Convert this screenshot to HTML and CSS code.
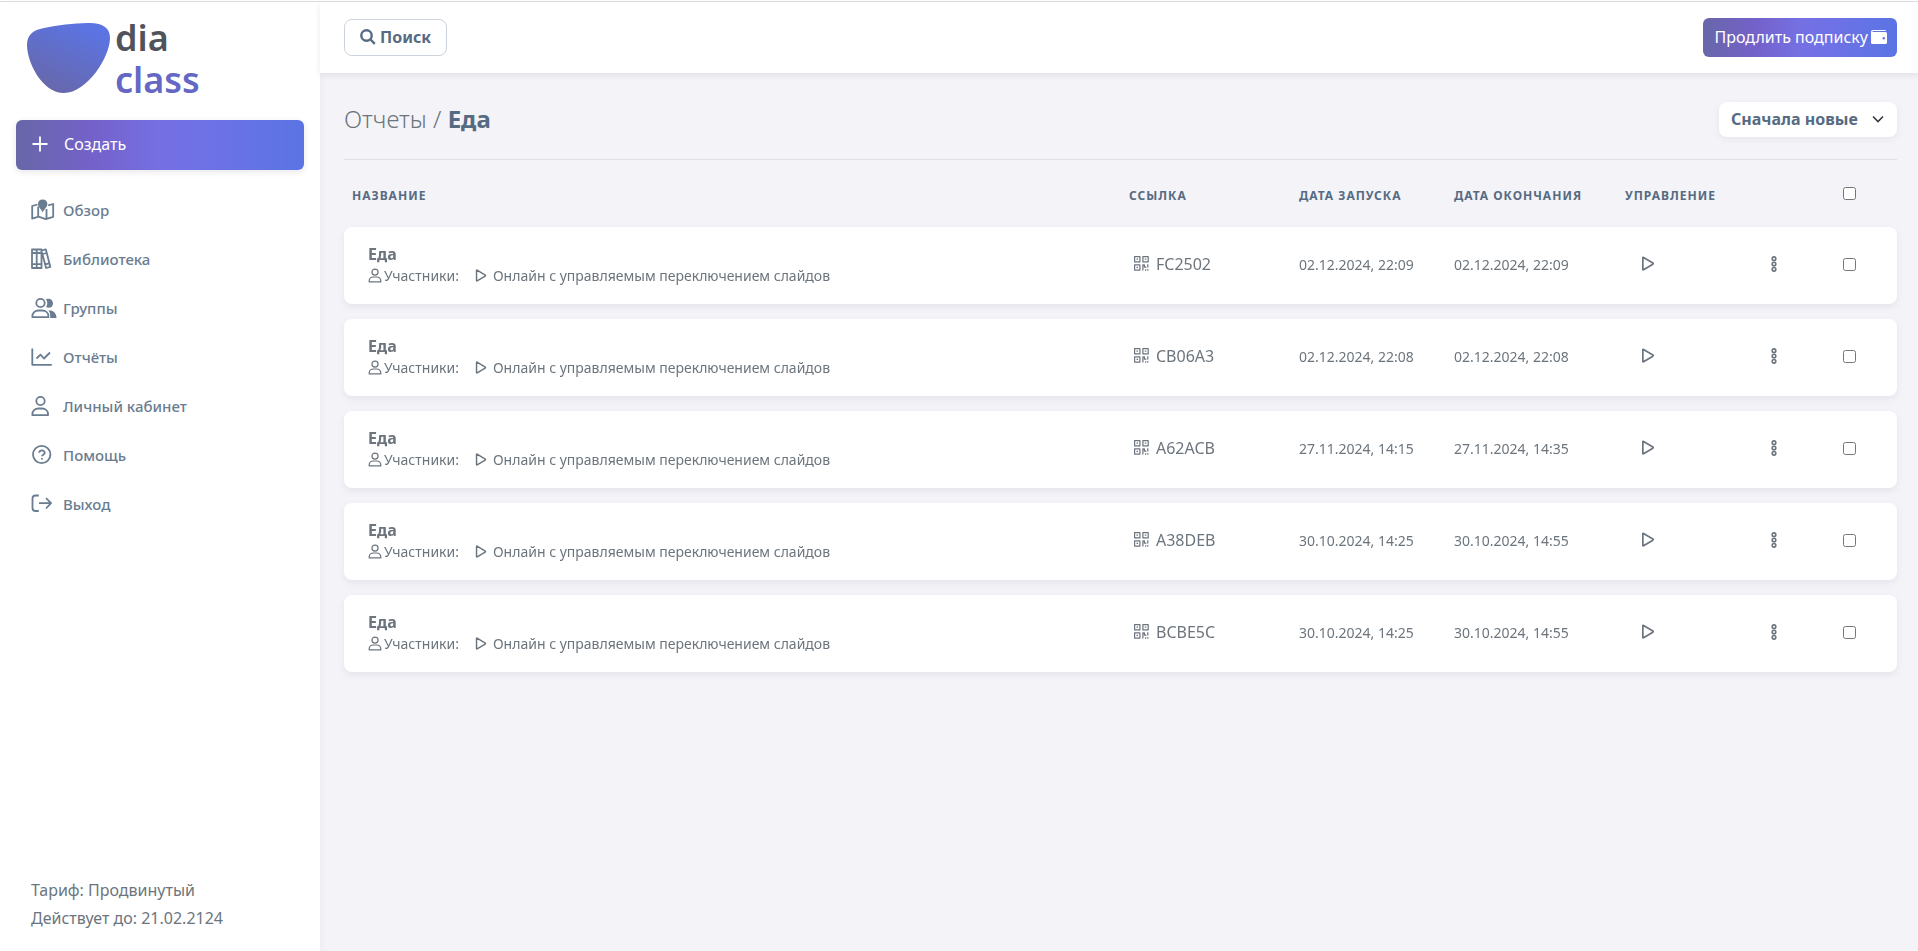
FILE: index.html
```html
<!DOCTYPE html>
<html lang="ru">
<head>
<meta charset="utf-8">
<title>Отчеты / Еда</title>
<link rel="stylesheet" href="styles.css">
</head>
<body>
<svg class="sprite" aria-hidden="true">
  <symbol id="user" viewBox="0 0 20 22"><circle cx="10" cy="6" r="4.5"/><path d="M1.5 20.5v-1.300c0-3.600 2.900-6 6.500-6h4c3.600 0 6.500 2.400 6.500 6v1.300z"/></symbol>
  <symbol id="play" viewBox="0 0 14 16"><path d="M1.500 1.700v12.600q0 .7.7.4l10-6q.7-.7 0-1.200l-10-6q-.7-.4-.7.2z"/></symbol>
  <symbol id="qr" viewBox="0 0 15 15"><path d="M.6.600h5.300v5.300H.6zM8.900.600h5.300v5.300H8.900zM.6 8.800h5.300v5.300H.6z"/><path d="M2.500 3.200h1.500M10.800 3.200h1.500M2.500 11.400h1.500M8.900 14.600V8.800h1.500v2.300h2M13.800 8.200v3.300M11.700 13.200v1.500M13 13.800h1.500"/></symbol>
  <symbol id="dots" viewBox="0 0 6 16"><circle cx="3" cy="2.700" r="1.800"/><circle cx="3" cy="8" r="1.800"/><circle cx="3" cy="13.300" r="1.800"/></symbol>
</svg>
<div class="app">
  <aside class="sidebar">
    <a class="logo" href="#" aria-label="dia class">
      <svg class="logo-mark" viewBox="0 0 84 70"><defs><linearGradient id="lg" x1=".3" y1="1" x2=".8" y2=".1"><stop offset="0" stop-color="#6867aa"/><stop offset="1" stop-color="#5b74e2"/></linearGradient></defs><path fill="url(#lg)" d="M17 5Q38 .6 61 0C76-.2 83 5 83 15C83 34 60 70 37 70C15 70 0 39 0 22C0 12 6 7 17 5Z"/></svg>
      <span class="logo-text"><span class="logo-dark">dia</span><span>class</span></span>
    </a>
    <button class="create" type="button">
      <svg class="icon16" viewBox="0 0 16 16"><path d="M8 .5v15M.5 8h15"/></svg>Создать
    </button>
    <nav class="menu">
      <a href="#"><svg viewBox="0 0 26 22"><path d="M6.500 5.500L1.200 7v12.700l6.300-2 7.200 2.400 7.500-2.200V5l-5 1.300M7.200 7.500v10M15.500 10v9.500"/><path class="solid" d="M11.700.500c-3 0-4.700 2-4.700 4.600 0 3 3 5 4.700 8.200 1.700-3.200 4.700-5.200 4.700-8.200 0-2.600-1.700-4.600-4.700-4.600z"/></svg>Обзор</a>
      <a href="#"><svg viewBox="0 0 26 22"><path d="M1 1.500h9.500v18.500H1zM5.700 1.500v18.500M1 5h9.500M1 16.200h9.500M10.500 2.500l4.300-1.200 4.500 17.500-4.200 1.200-4.300-16M11.700 6l4-1M14.200 16.300l4-1"/></svg>Библиотека</a>
      <a href="#"><svg viewBox="0 0 26 22"><circle cx="9.500" cy="6" r="4.200"/><path d="M1.400 20.200v-1.200c0-3.200 2.600-5.500 6-5.500h4c3.400 0 6 2.300 6 5.500v1.200z"/><path class="solid" d="M15 2.200c3.500-1.500 7 .6 7 4.200s-3.500 5.500-7 3.700c1.700-2.600 1.700-5.400 0-7.900zM17.500 13.200c4.600-.2 8 2.800 8 7.800h-6.300c.2-3.400-.1-5.500-1.700-7.800z"/></svg>Группы</a>
      <a href="#"><svg viewBox="0 0 26 22"><path d="M1.300 2.500v16.300h19.500M5.500 12.500l4-3.800 3.500 3.800 6-6"/></svg>Отчёты</a>
      <a href="#"><svg viewBox="0 0 26 22"><circle cx="9.500" cy="6" r="4.200"/><path d="M1.400 20.200v-1.200c0-3.200 2.600-5.500 6-5.500h3.600c3.400 0 6 2.300 6 5.500v1.200z"/></svg>Личный кабинет</a>
      <a href="#"><svg viewBox="0 0 26 22"><circle cx="10.700" cy="10.500" r="8.700"/><path d="M8.200 8.800c0-3.300 5.800-3 5.500.1-.2 1.800-2.600 1.700-2.700 3.400M11 14v1.500"/></svg>Помощь</a>
      <a href="#"><svg viewBox="0 0 26 22"><path d="M7.800 2.500H4.500Q1.500 2.500 1.500 5.500v9.500q0 3 3 3h3.300M8 10.200h12M15 5l5 5.200-5 5.300"/></svg>Выход</a>
    </nav>
    <div class="tariff"><div>Тариф: Продвинутый</div><div>Действует до: 21.02.2124</div></div>
  </aside>
  <div class="page">
    <header class="topbar">
      <button class="search" type="button"><svg class="icon16" viewBox="0 0 16 16"><circle cx="6.500" cy="6.500" r="5.200"/><path d="M10.500 10.500l4.300 4.300"/></svg>Поиск</button>
      <button class="renew" type="button">Продлить подписку<svg class="icon16" viewBox="0 0 16 16"><path class="solid" d="M2 1h12q1 0 1 1H2q-.6 0-.6.500T2 3h12.500Q16 3 16 4.500v9q0 1.500-1.500 1.500h-13Q0 15 0 13.500V3Q0 1 2 1z"/><circle class="hole" cx="12.800" cy="9.200" r="1.200"/></svg></button>
    </header>
    <main>
      <div class="heading">
        <h1><a href="#">Отчеты</a> / <b>Еда</b></h1>
        <select class="sort" aria-label="Сортировка"><option>Сначала новые</option><option>Сначала старые</option></select>
      </div>
      <table class="reports">
        <colgroup><col><col class="c-link"><col class="c-start"><col class="c-end"><col class="c-play"><col class="c-more"><col class="c-check"></colgroup>
        <thead><tr><th>Название</th><th>Ссылка</th><th>Дата запуска</th><th>Дата окончания</th><th colspan="2">Управление</th><th class="check"><input type="checkbox" aria-label="Выбрать все"></th></tr></thead>
        <tbody>
          <tr><td><strong>Еда</strong><div class="meta"><svg class="m-user"><use href="#user"/></svg><span>Участники:</span><svg class="m-play"><use href="#play"/></svg><span>Онлайн с управляемым переключением слайдов</span></div></td><td><a class="code" href="#"><svg><use href="#qr"/></svg>FC2502</a></td><td>02.12.2024, 22:09</td><td>02.12.2024, 22:09</td><td><button class="play" type="button" aria-label="Запустить"><svg><use href="#play"/></svg></button></td><td><button class="more" type="button" aria-label="Ещё"><svg><use href="#dots"/></svg></button></td><td class="check"><input type="checkbox" aria-label="Выбрать FC2502"></td></tr>
          <tr><td><strong>Еда</strong><div class="meta"><svg class="m-user"><use href="#user"/></svg><span>Участники:</span><svg class="m-play"><use href="#play"/></svg><span>Онлайн с управляемым переключением слайдов</span></div></td><td><a class="code" href="#"><svg><use href="#qr"/></svg>CB06A3</a></td><td>02.12.2024, 22:08</td><td>02.12.2024, 22:08</td><td><button class="play" type="button" aria-label="Запустить"><svg><use href="#play"/></svg></button></td><td><button class="more" type="button" aria-label="Ещё"><svg><use href="#dots"/></svg></button></td><td class="check"><input type="checkbox" aria-label="Выбрать CB06A3"></td></tr>
          <tr><td><strong>Еда</strong><div class="meta"><svg class="m-user"><use href="#user"/></svg><span>Участники:</span><svg class="m-play"><use href="#play"/></svg><span>Онлайн с управляемым переключением слайдов</span></div></td><td><a class="code" href="#"><svg><use href="#qr"/></svg>A62ACB</a></td><td>27.11.2024, 14:15</td><td>27.11.2024, 14:35</td><td><button class="play" type="button" aria-label="Запустить"><svg><use href="#play"/></svg></button></td><td><button class="more" type="button" aria-label="Ещё"><svg><use href="#dots"/></svg></button></td><td class="check"><input type="checkbox" aria-label="Выбрать A62ACB"></td></tr>
          <tr><td><strong>Еда</strong><div class="meta"><svg class="m-user"><use href="#user"/></svg><span>Участники:</span><svg class="m-play"><use href="#play"/></svg><span>Онлайн с управляемым переключением слайдов</span></div></td><td><a class="code" href="#"><svg><use href="#qr"/></svg>A38DEB</a></td><td>30.10.2024, 14:25</td><td>30.10.2024, 14:55</td><td><button class="play" type="button" aria-label="Запустить"><svg><use href="#play"/></svg></button></td><td><button class="more" type="button" aria-label="Ещё"><svg><use href="#dots"/></svg></button></td><td class="check"><input type="checkbox" aria-label="Выбрать A38DEB"></td></tr>
          <tr><td><strong>Еда</strong><div class="meta"><svg class="m-user"><use href="#user"/></svg><span>Участники:</span><svg class="m-play"><use href="#play"/></svg><span>Онлайн с управляемым переключением слайдов</span></div></td><td><a class="code" href="#"><svg><use href="#qr"/></svg>BCBE5C</a></td><td>30.10.2024, 14:25</td><td>30.10.2024, 14:55</td><td><button class="play" type="button" aria-label="Запустить"><svg><use href="#play"/></svg></button></td><td><button class="more" type="button" aria-label="Ещё"><svg><use href="#dots"/></svg></button></td><td class="check"><input type="checkbox" aria-label="Выбрать BCBE5C"></td></tr>
        </tbody>
      </table>
    </main>
  </div>
</div>
</body>
</html>
```
FILE: styles.css
```css
* { box-sizing: border-box; }
:root {
  --slate: #566b82;
  --grey: #6c757d;
  --brand: linear-gradient(90deg, #6867a8 0%, #7461ca 27%, #7570e3 50%, #6d72e6 68%, #5a74e4 100%);
}
body {
  margin: 0;
  background: #f4f3f8;
  color: var(--grey);
  font: 16px/24px "Noto Sans", "Open Sans", sans-serif;
}
.sprite { display: none; }
svg { display: block; flex: none; fill: none; stroke: currentColor; stroke-width: 1.8px; stroke-linejoin: round; }
.solid { fill: currentColor; stroke: none; }
.hole { fill: #6373e4; stroke: none; }
a { color: inherit; text-decoration: none; }
button { font: inherit; cursor: pointer; }
.icon16 { width: 16px; height: 16px; }

.app {
  display: flex;
  min-height: 100vh;
  border-top: 1px solid #fff;
  box-shadow: inset 0 1px #dee0e3;
}
.sidebar {
  display: flex;
  flex-direction: column;
  flex: none;
  width: 320px;
  margin-top: 1px;
  padding: 16px 16px 19px;
  background: #fff;
  box-shadow: 0 2px 8px rgba(60, 60, 90, .06);
}
.logo { display: flex; gap: 4px; padding: 5px 11px 0; height: 86px; }
.logo-mark { width: 84px; height: 70px; stroke: none; }
.logo-text { display: flex; flex-direction: column; color: #6468c4; font-size: 36px; font-weight: 600; line-height: 42px; margin-top: -6px; }
.logo-dark { color: #50535c; }
.create {
  display: flex;
  align-items: center;
  gap: 16px;
  height: 50px;
  margin-top: 16px;
  padding: 0 16px 2px;
  border: 0;
  border-radius: 6px;
  background: var(--brand);
  box-shadow: 0 2px 6px rgba(60, 60, 90, .12);
  color: #fff;
}
.menu { display: flex; flex-direction: column; margin-top: 15px; }
.menu a {
  display: flex;
  align-items: center;
  gap: 6px;
  height: 49px;
  padding-left: 15px;
  color: #6a7c90;
  font-size: 15px;
  font-weight: 500;
}
.menu svg { width: 26px; height: 22px; }
.tariff { margin-top: auto; padding-left: 15px; line-height: 28px; }

.page { flex: 1; min-width: 0; }
.topbar {
  display: flex;
  justify-content: space-between;
  align-items: center;
  height: 71px;
  margin-top: 1px;
  padding: 0 21px 0 24px;
  background: #fff;
  box-shadow: 0 2px 6px rgba(60, 60, 90, .1);
}
.search {
  display: flex;
  align-items: center;
  gap: 4px;
  height: 37px;
  padding: 0 15px 2px;
  border: 1px solid #cdd3da;
  border-radius: 8px;
  background: #fff;
  color: var(--slate);
  font-weight: 700;
}
.search svg { stroke-width: 2.4px; }
.renew {
  display: flex;
  align-items: center;
  gap: 3px;
  height: 39px;
  padding: 0 10px 2px 12px;
  border: 0;
  border-radius: 6px;
  background: var(--brand);
  color: #fff;
}
main { padding: 0 21px 32px 24px; }
.heading {
  display: flex;
  align-items: center;
  justify-content: space-between;
  height: 87px;
  padding-top: 6px;
  border-bottom: 1px solid #dee0e6;
}
h1 { margin: 0; font-size: 24px; line-height: 32px; font-weight: 300; }
h1 b { color: var(--slate); font-weight: 700; }
.sort {
  appearance: none;
  width: 178px;
  height: 35px;
  padding: 0 12px;
  border: 0;
  border-radius: 8px;
  background: #fff url("data:image/svg+xml,%3Csvg xmlns='http://www.w3.org/2000/svg' viewBox='0 0 12 12'%3E%3Cpath d='M1 3.500l5 5 5-5' fill='none' stroke='%23343a40' stroke-width='1.600'/%3E%3C/svg%3E") no-repeat right 13px center / 12px 12px;
  box-shadow: 0 2px 6px rgba(60, 60, 90, .07);
  color: var(--slate);
  font: inherit;
  font-weight: 700;
}

.reports { width: 100%; table-layout: fixed; border-collapse: separate; border-spacing: 0 15px; }
.c-link { width: 170px; }
.c-start { width: 155px; }
.c-end { width: 171px; }
.c-play { width: 146px; }
.c-more { width: 56px; }
.c-check { width: 78px; }
th {
  height: 37px;
  padding: 5px 8px 0;
  color: var(--slate);
  font-size: 12px;
  line-height: 18px;
  letter-spacing: 1px;
  text-align: left;
  text-transform: uppercase;
  white-space: nowrap;
}
tbody tr { filter: drop-shadow(0 3px 3px rgba(60, 70, 100, .08)); }
td { height: 77px; padding: 0 8px 2px; background: #fff; font-size: 14px; white-space: nowrap; }
td:first-child { padding-left: 24px; border-radius: 8px 0 0 8px; }
td:last-child { border-radius: 0 8px 8px 0; }
td strong { display: block; font-size: 16px; line-height: 22px; }
.meta { display: flex; align-items: center; line-height: 22px; }
.m-user { width: 14px; height: 15px; margin-right: 2px; }
.m-play { width: 12px; height: 13px; margin: 0 6px 0 16px; }
.code { display: flex; align-items: center; gap: 7px; padding: 0 0 2px 5px; font-size: 16px; }
.code svg { width: 15px; height: 15px; stroke-width: 1.2px; }
.play, .more { display: block; padding: 0 0 2px; border: 0; background: none; color: inherit; }
.play { margin-left: 16px; }
.play svg { width: 14px; height: 15px; }
.more svg { width: 6px; height: 16px; stroke-width: 1.6px; }
.check { padding: 0 0 1px 24px; }
td.check { padding-bottom: 3px; }
.check input { display: block; width: 13px; height: 13px; margin: 0; }
```
